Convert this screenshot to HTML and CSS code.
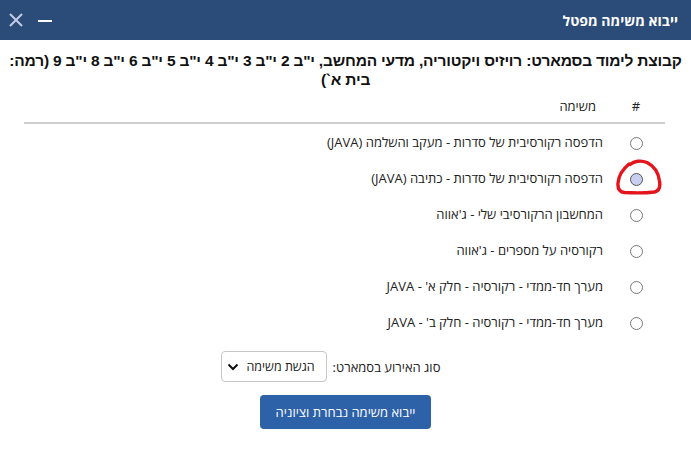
FILE: index.html
```html
<!DOCTYPE html>
<html lang="he" dir="rtl">
<head>
<meta charset="utf-8">
<title>ייבוא משימה מפטל</title>
<link rel="stylesheet" href="styles.css">
</head>
<body>
<div class="dialog">
  <header class="titlebar">
    <span class="title">ייבוא משימה מפטל</span>
    <div class="controls">
      <span class="minimize"></span>
      <svg class="close" width="16" height="16" viewBox="0 0 16 16"><path d="M2 2 L14 14 M14 2 L2 14" stroke="#c3cde0" stroke-width="2" fill="none"/></svg>
    </div>
  </header>
  <main class="content">
    <h3 class="group">קבוצת לימוד בסמארט: רויזיס ויקטוריה, מדעי המחשב, י"ב 2 י"ב 3 י"ב 4 י"ב 5 י"ב 6 י"ב 8 י"ב 9 (רמה: בית א`)</h3>
    <table class="tasks">
      <thead>
        <tr><th class="num">#</th><th class="name">משימה</th></tr>
      </thead>
      <tbody>
        <tr><td class="num"><span class="radio"></span></td><td class="name">הדפסה רקורסיבית של סדרות - מעקב והשלמה (JAVA)</td></tr>
        <tr><td class="num"><span class="radio checked"></span>
          <svg class="mark" width="48" height="38" viewBox="0 0 48 38"><path d="M14 5 C8 10 3.5 17 3 24 C2.5 30 4.5 33 9.5 33.5 C19 34 31 34 39.5 33 C44.5 32 45.5 28 44.5 22 C43.5 14 39 7 32 3.5 C26 1 19 2 15 5.5" stroke="#e3141b" stroke-width="3.4" fill="none" stroke-linecap="round" stroke-linejoin="round"/></svg>
        </td><td class="name">הדפסה רקורסיבית של סדרות - כתיבה (JAVA)</td></tr>
        <tr><td class="num"><span class="radio"></span></td><td class="name">המחשבון הרקורסיבי שלי - ג'אווה</td></tr>
        <tr><td class="num"><span class="radio"></span></td><td class="name">רקורסיה על מספרים - ג'אווה</td></tr>
        <tr><td class="num"><span class="radio"></span></td><td class="name">מערך חד-ממדי - רקורסיה - חלק א' - JAVA</td></tr>
        <tr><td class="num"><span class="radio"></span></td><td class="name">מערך חד-ממדי - רקורסיה - חלק ב' - JAVA</td></tr>
      </tbody>
    </table>
    <div class="event">
      <label class="event-label">סוג האירוע בסמארט:</label>
      <div class="select">
        <span class="select-text">הגשת משימה</span>
        <svg class="chevron" width="12" height="8" viewBox="0 0 12 8"><path d="M1.5 1.5 L6 6 L10.5 1.5" stroke="#111" stroke-width="2" fill="none"/></svg>
      </div>
    </div>
    <div class="actions">
      <button class="import">ייבוא משימה נבחרת וציוניה</button>
    </div>
  </main>
</div>
</body>
</html>
```
FILE: styles.css
```css
html, body {
  margin: 0;
  padding: 0;
  background: #fff;
}
body {
  font-family: "Open Sans", "Liberation Sans", sans-serif;
  color: #222;
  direction: rtl;
}
.titlebar {
  height: 40px;
  background: #2b4b79;
  display: flex;
  align-items: center;
  justify-content: space-between;
  padding: 0 13px 0 8px;
}
.title {
  color: #fff;
  font-weight: 700;
  font-size: 14px;
}
.controls {
  display: flex;
  align-items: center;
  gap: 14px;
  direction: ltr;
  flex-direction: row-reverse;
}
.minimize {
  width: 14px;
  height: 2px;
  background: #fff;
  margin-top: 1px;
}
.close {
  display: block;
}
.content {
  padding: 0 0 20px;
}
.group {
  font-family: "Liberation Sans", Arial, sans-serif;
  font-weight: 700;
  font-size: 15.5px;
  line-height: 19px;
  text-align: center;
  margin: 11px 8px 0;
  color: #111;
  letter-spacing: -0.2px;
}
.tasks {
  width: calc(100% - 50px);
  margin: 4px 26px 0 24px;
  border-collapse: collapse;
  font-size: 13px;
}
.tasks th {
  font-weight: 400;
  font-size: 13px;
  height: 25px;
  padding: 4px 0 0;
  vertical-align: top;
  border-bottom: 2px solid #cfcfcf;
  color: #222;
}
.tasks th.num {
  width: 58px;
  text-align: center;
}
.tasks th.name {
  text-align: right;
  padding-right: 11px;
}
.tasks td {
  height: 36px;
  padding: 0;
}
.tasks td.num {
  text-align: center;
  position: relative;
}
.tasks td.name {
  text-align: right;
  padding-right: 4px;
}
.radio {
  display: inline-block;
  width: 11px;
  height: 11px;
  border: 1px solid #777;
  border-radius: 50%;
  vertical-align: middle;
  background: #fff;
  box-sizing: content-box;
}
.radio.checked {
  background: #c8cdf2;
  border-color: #555;
}
.mark {
  position: absolute;
  left: 8px;
  top: -1px;
}
.event {
  display: flex;
  align-items: center;
  justify-content: center;
  gap: 6px;
  margin-top: 11px;
  padding-right: 30px;
  font-size: 13px;
}
.select {
  width: 106px;
  height: 31px;
  border: 1px solid #c6c6c6;
  border-radius: 4px;
  display: flex;
  align-items: center;
  justify-content: space-between;
  padding: 0 11px 0 5px;
  box-sizing: border-box;
  white-space: nowrap;
}
.select-text {
  font-size: 12.5px;
}
.chevron {
  flex-shrink: 0;
}
.event-label {
  white-space: nowrap;
}
.actions {
  display: flex;
  justify-content: center;
  margin-top: 13px;
}
.import {
  font-family: "Open Sans", "Liberation Sans", sans-serif;
  background: #2d61a8;
  color: #fff;
  border: none;
  border-radius: 4px;
  width: 171px;
  height: 34px;
  font-size: 13px;
  padding: 0;
}
```
